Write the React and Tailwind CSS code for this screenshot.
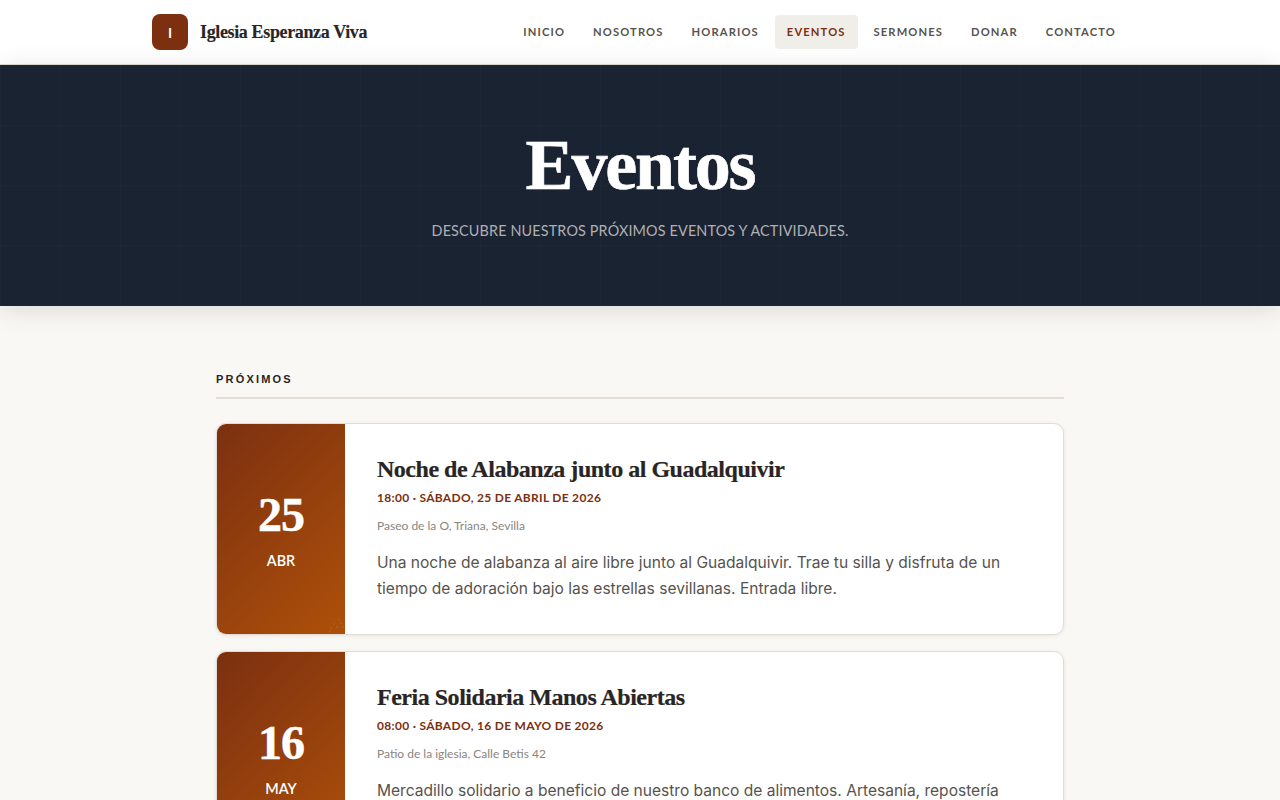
const navItems = ['Inicio', 'Nosotros', 'Horarios', 'Eventos', 'Sermones', 'Donar', 'Contacto'];

const events = [
  {
    day: '25',
    month: 'ABR',
    title: 'Noche de Alabanza junto al Guadalquivir',
    when: '18:00 · Sábado, 25 de abril de 2026',
    place: 'Paseo de la O, Triana, Sevilla',
    text: 'Una noche de alabanza al aire libre junto al Guadalquivir. Trae tu silla y disfruta de un tiempo de adoración bajo las estrellas sevillanas. Entrada libre.',
  },
  {
    day: '16',
    month: 'MAY',
    title: 'Feria Solidaria Manos Abiertas',
    when: '08:00 · Sábado, 16 de mayo de 2026',
    place: 'Patio de la iglesia, Calle Betis 42',
    text: 'Mercadillo solidario a beneficio de nuestro banco de alimentos. Artesanía, repostería casera y mucho más para toda la familia del barrio.',
  },
];

const EventCard = ({ event }) => (
  <article className="flex min-h-[212px] overflow-hidden rounded-[10px] border border-[#e2dcd4] bg-white shadow-[0_1px_4px_rgba(0,0,0,0.08)]">
    <div className="relative flex w-[128px] shrink-0 flex-col items-center justify-center bg-[linear-gradient(135deg,#7c3010,#ae500a)] text-white">
      <span className="font-['Liberation_Serif',serif] text-[48px] font-bold leading-[54px] tracking-[-0.02em] [-webkit-text-stroke:0.5px_currentColor]">{event.day}</span>
      <span className="mt-[9px] font-['Lato',sans-serif] text-[14.4px] font-semibold leading-[20px]">{event.month}</span>
      <svg className="absolute bottom-0 right-0 h-4 w-4" viewBox="0 0 16 16" fill="#e8a860" opacity="0.6">
        <circle cx="10" cy="2" r="0.5" />
        <circle cx="5" cy="6" r="0.5" />
        <circle cx="12" cy="5" r="0.5" />
        <circle cx="2" cy="10" r="0.5" />
        <circle cx="8" cy="9" r="0.5" />
        <circle cx="14" cy="9" r="0.5" />
        <circle cx="1" cy="13" r="0.5" />
      </svg>
    </div>
    <div className="flex-1 px-8 pt-[31px] pb-8">
      <h3 className="font-['Liberation_Serif',serif] text-[24px] font-bold leading-[29px] tracking-[-0.02em] text-[#292524] [-webkit-text-stroke:0.2px_currentColor]">{event.title}</h3>
      <p className="mt-[5px] font-['Lato',sans-serif] text-[12px] font-bold uppercase leading-[18px] tracking-[0.025em] text-[#7c3010]">{event.when}</p>
      <p className="mt-[10px] font-['Lato',sans-serif] text-[12px] leading-[18px] text-[#8a8580]">{event.place}</p>
      <p className="mt-[15px] font-['Inter',sans-serif] text-[15.55px] leading-[26px] text-[#57534e]">{event.text}</p>
    </div>
  </article>
);

export default function App() {
  return (
    <div className="h-[800px] overflow-hidden bg-[#f9f8f4]">
      <header className="flex h-[65px] items-center justify-between border-b border-[#e2dcd4] bg-white px-[152px]">
        <div className="flex items-center gap-3">
          <div className="flex h-9 w-9 items-center justify-center rounded-lg bg-[#7c3010] font-['Lato',sans-serif] text-[14px] font-bold text-white">I</div>
          <span className="font-['Liberation_Serif',serif] text-[18px] font-bold tracking-[-0.02em] text-[#292524] [-webkit-text-stroke:0.15px_currentColor]">Iglesia Esperanza Viva</span>
        </div>
        <nav className="flex items-center gap-[4px]">
          {navItems.map((item) => (
            <a
              key={item}
              className={`rounded px-[12px] py-[8px] font-['Lato',sans-serif] text-[11.2px] font-bold uppercase leading-[18px] tracking-[0.1em] ${item === 'Eventos' ? 'bg-[#f0eee9] text-[#7c3010]' : 'text-[#57534e]'}`}
            >
              {item}
            </a>
          ))}
        </nav>
      </header>

      <section className="flex h-[241px] flex-col items-center bg-[#1a2332] bg-[linear-gradient(rgba(255,255,255,0.015)_1px,transparent_1px),linear-gradient(90deg,rgba(255,255,255,0.015)_1px,transparent_1px)] bg-[size:60px_60px] pt-[60px] shadow-[0_4px_24px_rgba(0,0,0,0.12)]">
        <h1 className="font-['Liberation_Serif',serif] text-[72px] font-bold leading-[80px] tracking-[-0.03em] text-white [-webkit-text-stroke:0.6px_currentColor]">Eventos</h1>
        <p className="mt-[14px] font-['Lato',sans-serif] text-[14.4px] uppercase leading-[24px] tracking-[0.01em] text-[#b0afb2]">Descubre nuestros próximos eventos y actividades.</p>
      </section>

      <main className="mx-auto w-[848px] pt-[64px]">
        <h2 className="border-b-2 border-[#e2dcd4] pb-[9px] font-['Liberation_Sans',sans-serif] text-[11px] font-bold uppercase leading-[18px] tracking-[0.2em] text-[#292524]">Próximos</h2>
        <div className="mt-[24px] flex flex-col gap-[16px]">
          {events.map((event) => (
            <EventCard key={event.day} event={event} />
          ))}
        </div>
      </main>
    </div>
  );
}
